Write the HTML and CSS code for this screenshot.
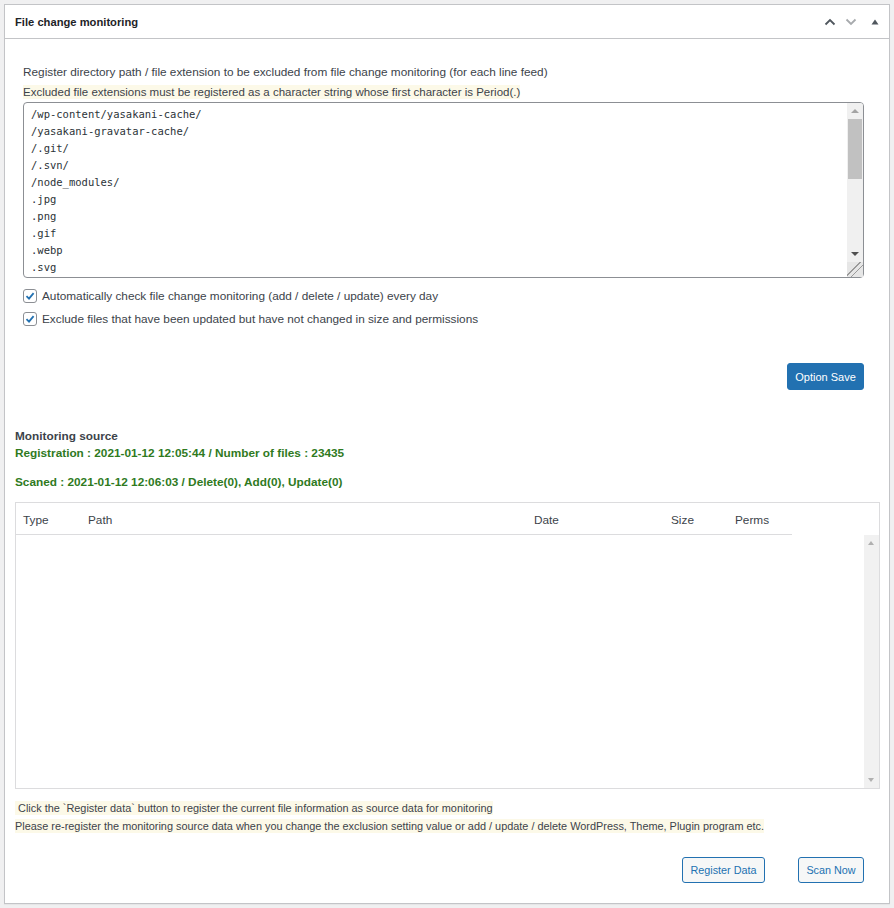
FILE: index.html
```html
<!DOCTYPE html>
<html lang="en">
<head>
<meta charset="utf-8">
<title>File change monitoring</title>
<link rel="stylesheet" href="styles.css">
</head>
<body>
<div class="postbox">
  <div class="postbox-header">
    <h2 class="title">File change monitoring</h2>
    <div class="handle-actions">
      <svg class="chev chev-up" width="14" height="10" viewBox="0 0 14 10"><path d="M2.5 7.5 L7 3 L11.5 7.5" fill="none" stroke="currentColor" stroke-width="1.8"/></svg>
      <svg class="chev chev-down" width="14" height="10" viewBox="0 0 14 10"><path d="M2.5 2.5 L7 7 L11.5 2.5" fill="none" stroke="currentColor" stroke-width="1.8"/></svg>
      <svg class="tri" width="10" height="10" viewBox="0 0 10 10"><path d="M1.5 7.5 L5 2.5 L8.5 7.5 Z" fill="currentColor"/></svg>
    </div>
  </div>
  <div class="inside">
    <div class="options">
      <p class="desc">Register directory path / file extension to be excluded from file change monitoring (for each line feed)</p>
      <p class="desc desc-note"><span class="note">Excluded file extensions must be registered as a character string whose first character is Period(.)</span></p>
      <div class="ta-wrap">
        <textarea class="excl" spellcheck="false">/wp-content/yasakani-cache/
/yasakani-gravatar-cache/
/.git/
/.svn/
/node_modules/
.jpg
.png
.gif
.webp
.svg
.ico
.css</textarea>
        <div class="vscroll">
          <span class="arr up"></span>
          <span class="thumb"></span>
          <span class="arr down"></span>
          <span class="grip"></span>
        </div>
      </div>
      <label class="check first"><span class="box"><svg width="12" height="12" viewBox="0 0 12 12"><path d="M2.5 6.2 L5 8.6 L9.6 3.2" fill="none" stroke="#2271b1" stroke-width="1.8"/></svg></span>Automatically check file change monitoring (add / delete / update) every day</label>
      <label class="check"><span class="box"><svg width="12" height="12" viewBox="0 0 12 12"><path d="M2.5 6.2 L5 8.6 L9.6 3.2" fill="none" stroke="#2271b1" stroke-width="1.8"/></svg></span>Exclude files that have been updated but have not changed in size and permissions</label>
      <div class="save-row"><button class="btn-primary">Option Save</button></div>
    </div>

    <div class="source">
      <h3 class="src-title">Monitoring source</h3>
      <p class="ok">Registration : 2021-01-12 12:05:44 / Number of files : 23435</p>
      <p class="ok scan">Scaned : 2021-01-12 12:06:03 / Delete(0), Add(0), Update(0)</p>
    </div>

    <div class="result">
      <div class="thead">
        <span class="c-type">Type</span>
        <span class="c-path">Path</span>
        <span class="c-date">Date</span>
        <span class="c-size">Size</span>
        <span class="c-perms">Perms</span>
      </div>
      <div class="tbody">
        <div class="rows"></div>
        <div class="tscroll">
          <span class="tarr up"></span>
          <span class="tarr down"></span>
        </div>
      </div>
    </div>

    <div class="notes">
      <p><span class="note">&nbsp;Click the `Register data` button to register the current file information as source data for monitoring</span></p>
      <p><span class="note">Please re-register the monitoring source data when you change the exclusion setting value or add / update / delete WordPress, Theme, Plugin program etc.</span></p>
    </div>

    <div class="actions">
      <button class="btn-secondary reg">Register Data</button>
      <button class="btn-secondary scan-btn">Scan Now</button>
    </div>
  </div>
</div>
</body>
</html>
```

FILE: styles.css
```css
* { box-sizing: border-box; }
html, body { margin: 0; padding: 0; }
body {
  background: #f0f0f1;
  font-family: "Liberation Sans", Arial, sans-serif;
  font-size: 11.8px;
  color: #3c434a;
}
p { margin: 0; }

.postbox {
  margin: 4px;
  width: 886px;
  height: 900px;
  background: #fff;
  border: 1px solid #c3c4c7;
  box-shadow: 0 1px 1px rgba(0,0,0,.04);
}
.postbox-header {
  height: 34px;
  border-bottom: 1px solid #c3c4c7;
  display: flex;
  align-items: center;
  justify-content: space-between;
  padding: 0 9px 0 10px;
}
.title {
  margin: 0;
  font-size: 11.2px;
  font-weight: bold;
  color: #1d2327;
}
.handle-actions {
  display: flex;
  align-items: center;
  gap: 7px;
  margin-top: 1px;
}
.chev-up { color: #50575e; }
.chev-down { color: #a7aaad; }
.tri { color: #50575e; margin-left: 5px; }

.inside { padding: 0 9px 0 10px; }

.options { padding: 24px 16px 0 8px; }
.desc { line-height: 18px; color: #3c434a; }
.desc + .desc { margin-top: 2px; }
.desc-note { font-size: 11.5px; }
.note { background: #fcf9e8; padding: 1px 0; }

.ta-wrap {
  position: relative;
  margin-top: 1px;
  height: 176px;
}
.excl {
  display: block;
  width: 100%;
  height: 176px;
  border: 1px solid #8c8f94;
  border-radius: 4px;
  padding: 3px 22px 0 7px;
  font-family: "DejaVu Sans Mono", "Liberation Mono", monospace;
  font-size: 10.5px;
  line-height: 17px;
  color: #2c3338;
  resize: none;
  overflow: hidden;
  outline: none;
  background: #fff;
}
.vscroll {
  position: absolute;
  top: 1px;
  right: 1px;
  bottom: 1px;
  width: 16px;
  background: #f0f0f0;
  border-radius: 0 3px 3px 0;
}
.vscroll .arr {
  position: absolute;
  left: 4px;
  width: 0; height: 0;
  border-left: 4px solid transparent;
  border-right: 4px solid transparent;
}
.vscroll .arr.up { top: 6px; border-bottom: 4px solid #a3a3a3; }
.vscroll .arr.down { bottom: 21px; border-top: 4px solid #505050; }
.vscroll .thumb {
  position: absolute;
  left: 1px; right: 1px;
  top: 16px;
  height: 60px;
  background: #c1c1c1;
}
.vscroll .grip {
  position: absolute;
  left: 0; right: 0; bottom: 0;
  height: 15px;
  background:
    linear-gradient(135deg, transparent 9px, #9a9a9a 9px, #9a9a9a 10px, transparent 10px, transparent 13px, #9a9a9a 13px, #9a9a9a 14px, transparent 14px),
    #e6e6e6;
}

.check {
  display: flex;
  align-items: center;
  height: 23px;
  color: #3c434a;
}
.check.first { margin-top: 6px; }
.box {
  width: 14px; height: 14px;
  border: 1px solid #8c8f94;
  border-radius: 3px;
  margin: 0 5px 0 0;
  display: flex;
  align-items: center;
  justify-content: center;
  background: #fff;
  flex: none;
}

.save-row {
  display: flex;
  justify-content: flex-end;
  margin-top: 33px;
}
.btn-primary {
  height: 27px;
  width: 77px;
  background: #2271b1;
  border: 1px solid #2271b1;
  border-radius: 3px;
  color: #fff;
  font-family: inherit;
  font-size: 11px;
  padding: 0;
}

.source { margin-top: 37px; }
.src-title {
  margin: 0;
  font-size: 11.8px;
  font-weight: bold;
  color: #3c434a;
  line-height: 18px;
}
.ok {
  color: #2f7a1e;
  font-weight: bold;
  line-height: 17px;
}
.ok.scan { margin-top: 12px; }

.result {
  margin-top: 11px;
  border: 1px solid #dcdcde;
  height: 287px;
  display: flex;
  flex-direction: column;
}
.thead {
  width: 776px;
  height: 32px;
  padding-top: 3px;
  border-bottom: 1px solid #dcdcde;
  display: flex;
  align-items: center;
  position: relative;
  color: #3c434a;
}
.thead span { position: absolute; }
.c-type { left: 7px; }
.c-path { left: 72px; }
.c-date { left: 518px; }
.c-size { left: 655px; }
.c-perms { left: 719px; }
.tbody {
  flex: 1;
  display: flex;
}
.rows { flex: 1; }
.tscroll {
  width: 15px;
  background: #f1f1f1;
  position: relative;
}
.tarr {
  position: absolute;
  left: 4px;
  width: 0; height: 0;
  border-left: 3.5px solid transparent;
  border-right: 3.5px solid transparent;
}
.tarr.up { top: 6px; border-bottom: 4px solid #b0b0b0; }
.tarr.down { bottom: 6px; border-top: 4px solid #b0b0b0; }

.notes {
  margin-top: 10px;
  font-size: 10.9px;
  line-height: 18px;
  color: #3c434a;
}

.actions {
  display: flex;
  justify-content: flex-end;
  gap: 33px;
  margin-top: 22px;
  padding-right: 16px;
}
.btn-secondary {
  height: 26px;
  padding: 0;
  background: #f6f7f7;
  border: 1px solid #2271b1;
  border-radius: 3px;
  color: #2271b1;
  font-family: inherit;
  font-size: 10.8px;
}
.reg { width: 83px; }
.scan-btn { width: 66px; }
```
